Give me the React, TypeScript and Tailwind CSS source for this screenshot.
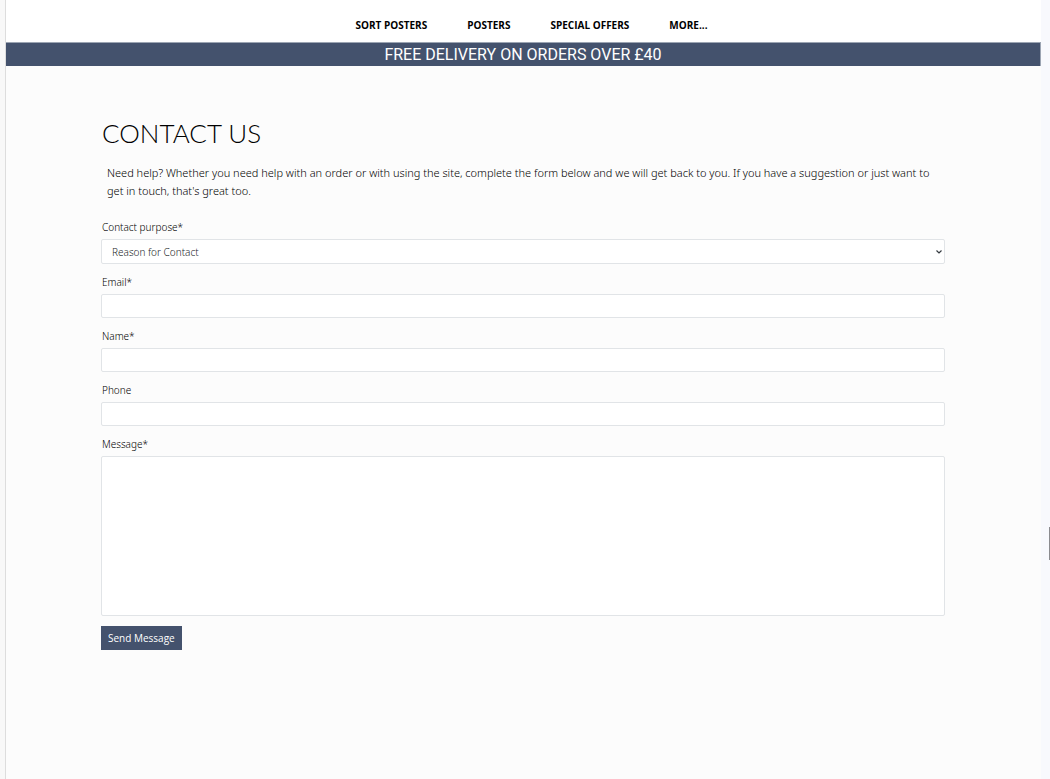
import React from "react";

const navItems = ["SORT POSTERS", "POSTERS", "SPECIAL OFFERS", "MORE..."];

const labelClass = "mb-[3px] block pl-px text-[10px] leading-[18px] font-light text-black";
const boxClass =
  "block w-full rounded-[2px] border border-[#e1e4e7] bg-white px-2.5 text-[10px] font-light text-[#212529] outline-none focus:border-[#44526d]";

function Field({ id, label, type }: { id: string; label: string; type: string }) {
  return (
    <div>
      <label htmlFor={id} className={labelClass}>
        {label}
      </label>
      <input id={id} type={type} className={`${boxClass} h-6`} />
    </div>
  );
}

export default function App() {
  return (
    <div className="relative flex min-h-screen bg-[#f8f9fd] pr-[9px] font-['Noto_Sans','Open_Sans',sans-serif]">
      <div className="w-1.5 shrink-0 border-r border-[#dddddd] bg-[#f8f8f8]" />
      <div className="flex min-w-0 flex-1 flex-col bg-[#fcfcfc]">
        <header className="bg-white">
          <nav className="flex h-[42px] items-center justify-center gap-10 pt-2 pl-4 font-['Open_Sans',sans-serif] text-[10px] font-bold text-black">
            {navItems.map((item) => (
              <a key={item} href="#" className="whitespace-nowrap">
                {item}
              </a>
            ))}
          </nav>
          <p className="h-6 border-t border-r border-[#9ca5b3] bg-[#44526d] text-center font-['Roboto',sans-serif] text-base leading-6 text-white">
            FREE DELIVERY ON ORDERS OVER £40
          </p>
        </header>

        <main className="px-24 pt-[51px] pl-[95px]">
          <h1 className="pl-px font-['Lato',sans-serif] text-[26px] leading-8 font-light text-black">
            CONTACT US
          </h1>
          <p className="mt-[15px] px-1.5 text-[11px] leading-[18px] font-light text-black">
            Need help? Whether you need help with an order or with using the site, complete the form
            below and we will get back to you. If you have a suggestion or just want to get in
            touch, that's great too.
          </p>

          <form className="mt-[18px] flex flex-col gap-[9px]" onSubmit={(e) => e.preventDefault()}>
            <div>
              <label htmlFor="purpose" className={labelClass}>
                Contact purpose*
              </label>
              <div className="relative">
                <select id="purpose" className={`${boxClass} h-[25px] appearance-none pt-px`}>
                  <option>Reason for Contact</option>
                  <option>Order enquiry</option>
                  <option>Suggestion</option>
                </select>
                <svg
                  aria-hidden="true"
                  viewBox="0 0 6 4"
                  className="pointer-events-none absolute top-[11px] right-[3px] h-1 w-1.5"
                >
                  <path d="M0.5 0.5 3 3 5.5 0.5" fill="none" stroke="#343a40" strokeWidth="1.2" />
                </svg>
              </div>
            </div>
            <Field id="email" label="Email*" type="email" />
            <Field id="name" label="Name*" type="text" />
            <Field id="phone" label="Phone" type="tel" />
            <div>
              <label htmlFor="message" className={labelClass}>
                Message*
              </label>
              <textarea id="message" className={`${boxClass} h-40 resize-none py-1`} />
            </div>
            <button
              type="submit"
              className="mt-px h-6 self-start bg-[#44526d] px-[7px] font-['Open_Sans',sans-serif] text-[10px] text-white"
            >
              Send Message
            </button>
          </form>
        </main>
      </div>
      <div className="absolute top-[527px] right-0 h-[33px] w-px bg-[#8b8b8f]" />
    </div>
  );
}
